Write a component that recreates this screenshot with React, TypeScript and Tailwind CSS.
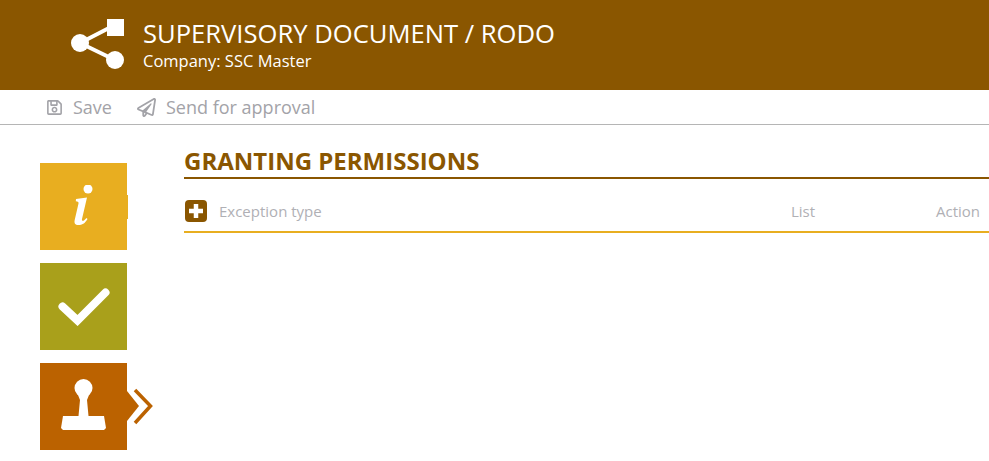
import { FaRegPaperPlane, FaRegSave } from "react-icons/fa"

function ShareIcon() {
  return (
    <svg width="54" height="54" viewBox="0 0 54 54" fill="white">
      <rect x="36" y="1" width="17" height="17" />
      <circle cx="9" cy="25" r="9" />
      <circle cx="44" cy="42" r="9" />
      <path d="M9 25 L40 9 M9 25 L44 42" stroke="white" strokeWidth="4" fill="none" />
    </svg>
  )
}

function InfoIcon() {
  return (
    <svg width="22" height="44" viewBox="0 1 22 44" fill="white">
      <circle cx="15" cy="5" r="4.5" />
      <path d="M3 15 L14 13.5 L9 35 C8.6 37 10 37.5 11.5 36 L13.5 34 L14.5 35 C12 39.5 9 41 5.5 41 C2 41 1 39 1.7 36 L5.5 19.5 C5.8 18 5 17.4 2.8 17.2 Z" />
    </svg>
  )
}

function CheckIcon() {
  return (
    <svg width="52" height="38" viewBox="0 0 52 38">
      <path d="M4.5 18.5 L19.5 32.5 L47.5 4.5" stroke="white" strokeWidth="8" fill="none" strokeLinecap="round" />
    </svg>
  )
}

function StampIcon() {
  return (
    <svg width="46" height="56" viewBox="0 1 46 56" fill="white">
      <circle cx="22.5" cy="10" r="9" />
      <path d="M17 17 H28 L26 22 L27.5 38 H17.5 L19 22 Z" />
      <path d="M2 38 H43 L45 50 L43 52 H2 L0 50 Z" />
    </svg>
  )
}

function Chevrons() {
  return (
    <svg width="26" height="38" viewBox="0 0 26 38" fill="none">
      <path d="M0 3 L12 18 L0 33 Z" fill="#bb6200" />
      <path d="M8 2 L23.5 18 L8 35" stroke="#bb6200" strokeWidth="3.5" />
    </svg>
  )
}

export default function App() {
  return (
    <div className="h-[461px] w-[989px] overflow-hidden bg-white font-['Open_Sans',sans-serif]">
      {/* Header */}
      <header className="flex h-[90px] items-center bg-[#8a5600] pl-[71px] text-white">
        <ShareIcon />
        <div className="ml-[18px] flex flex-col">
          <h1 className="text-[25.6px] leading-[32px]">SUPERVISORY DOCUMENT / RODO</h1>
          <p className="text-[16.5px] leading-[22px]">Company: SSC Master</p>
        </div>
      </header>

      {/* Toolbar */}
      <div className="flex h-[35px] items-center gap-[25px] border-b border-[#b5b5b5] pl-[46px] text-[18px] text-[#a3a3a8]">
        <span className="flex items-center gap-[10px]">
          <FaRegSave size={17} />
          Save
        </span>
        <span className="flex items-center gap-[10px]">
          <FaRegPaperPlane size={19} />
          Send for approval
        </span>
      </div>

      <div className="flex">
        {/* Steps */}
        <div className="ml-[40px] mt-[38px] flex w-[87px] flex-col gap-[13px]">
          <div className="relative flex h-[87px] items-center justify-center bg-[#e8ae20]">
            <InfoIcon />
            <div className="absolute left-[87px] top-[32px] h-[24px] w-px bg-[#e8ae20]" />
          </div>
          <div className="flex h-[87px] items-center justify-center bg-[#a9a01b]">
            <CheckIcon />
          </div>
          <div className="relative flex h-[87px] items-center justify-center bg-[#bb6200]">
            <StampIcon />
            <div className="absolute left-[87px] top-[25px]">
              <Chevrons />
            </div>
          </div>
        </div>

        {/* Content */}
        <main className="ml-[57px] mt-[23px] flex-1">
          <h2 className="border-b-2 border-[#8a5600] pb-[4px] text-[24px] leading-[25px] font-bold text-[#8a5600]">
            GRANTING PERMISSIONS
          </h2>
          <div className="flex h-[54px] items-center border-b-2 border-[#e8ae20] pt-[12px] text-[15px] text-[#b0b0b5]">
            <span className="ml-px flex h-[22px] w-[22px] items-center justify-center rounded-[4px] bg-[#8a5600]">
              <svg width="14" height="14" viewBox="0 0 14 14">
                <path d="M7 0 V14 M0 7 H14" stroke="white" strokeWidth="4.5" />
              </svg>
            </span>
            <span className="ml-[12px] w-[572px]">Exception type</span>
            <span className="w-[145px]">List</span>
            <span>Action</span>
          </div>
        </main>
      </div>
    </div>
  )
}
